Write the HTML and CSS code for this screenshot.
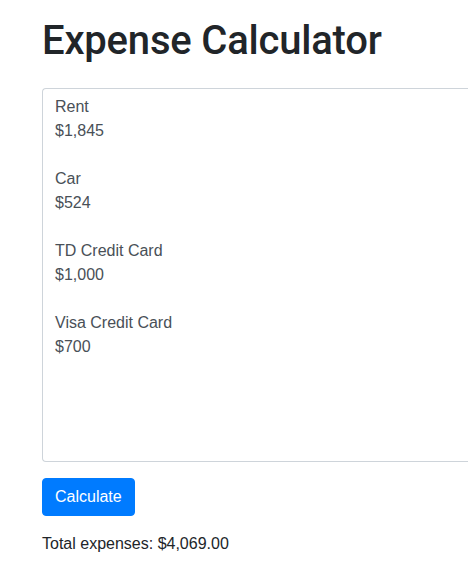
FILE: index.html
```html
<!DOCTYPE html>
<html lang="en">
<head>
<meta charset="utf-8">
<title>Expense Calculator</title>
<link rel="stylesheet" href="styles.css">
</head>
<body>
<main class="page">
  <h1 class="title">Expense Calculator</h1>
  <form class="form">
    <textarea class="field" rows="15">Rent
$1,845

Car
$524

TD Credit Card
$1,000

Visa Credit Card
$700</textarea>
    <button type="button" class="btn">Calculate</button>
  </form>
  <p class="total">Total expenses: $4,069.00</p>
</main>
</body>
</html>
```
FILE: styles.css
```css
html, body {
  margin: 0;
  background: #fff;
  overflow: hidden;
}
body {
  font-family: "Liberation Sans", Arial, sans-serif;
  font-size: 16px;
  line-height: 1.5;
  color: #212529;
}
.page {
  padding: 17px 0 0 42px;
}
.title {
  margin: 0 0 23px;
  font-family: Roboto, "Liberation Sans", sans-serif;
  font-size: 40px;
  line-height: 48px;
  font-weight: 500;
  letter-spacing: -0.2px;
  color: #212529;
}
.form {
  display: flex;
  flex-direction: column;
  align-items: stretch;
}
.field {
  display: block;
  box-sizing: border-box;
  width: 100%;
  height: 374px;
  margin: 0 0 16px;
  padding: 6px 12px;
  border: 1px solid #ced4da;
  border-right: none;
  border-radius: 4px 0 0 4px;
  font-family: inherit;
  font-size: 16px;
  line-height: 24px;
  color: #495057;
  background: #fff;
  resize: none;
  overflow: hidden;
}
.btn {
  align-self: flex-start;
  padding: 6px 12px;
  border: 1px solid #007bff;
  border-radius: 4px;
  background: #007bff;
  color: #fff;
  font-family: inherit;
  font-size: 16px;
  line-height: 24px;
  cursor: pointer;
}
.total {
  margin: 16px 0 0;
}
```
